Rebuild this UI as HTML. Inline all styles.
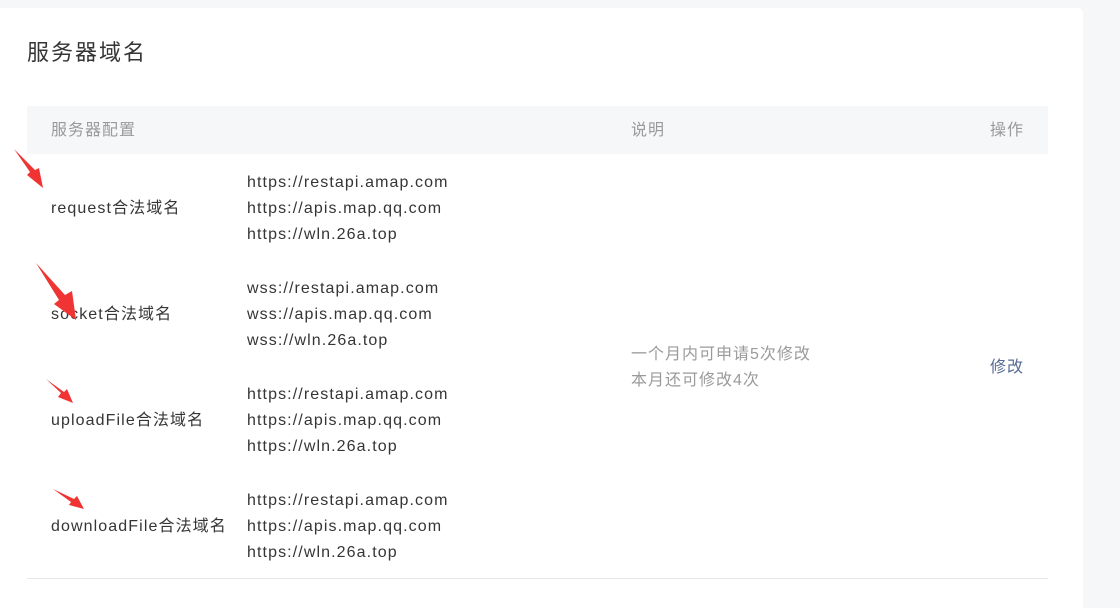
<!DOCTYPE html>
<html><head><meta charset="utf-8"><style>
html,body{margin:0;padding:0;}
body{width:1120px;height:594px;background:#f6f7f9;position:relative;overflow:hidden;font-family:"Liberation Sans","Noto Sans CJK SC",sans-serif;}
.card{position:absolute;left:0;top:8px;width:1083px;height:600px;background:#fff;border-radius:0 6px 0 0;}
.t{position:absolute;white-space:nowrap;}
.title{left:27px;top:37px;font-size:22px;color:#353535;line-height:32px;letter-spacing:2px;}
.head{position:absolute;left:27px;top:106px;width:1021px;height:48px;background:#f6f7f9;}
.h{font-size:16px;color:#9a9a9a;line-height:48px;top:107px;letter-spacing:1px;}
.lab{font-size:16px;color:#353535;left:51px;line-height:26px;letter-spacing:1.1px;}
.url{font-size:16px;color:#353535;left:247px;line-height:26px;letter-spacing:1.1px;}
.note{font-size:16px;color:#9a9a9a;left:631px;line-height:26px;letter-spacing:1px;}
.line{position:absolute;left:27px;top:578px;width:1021px;height:1px;background:#e7e7eb;}
</style></head><body>
<div class="card"></div>
<div class="t title">服务器域名</div>
<div class="head"></div>
<div class="t h" style="left:51px">服务器配置</div>
<div class="t h" style="left:631px">说明</div>
<div class="t h" style="left:990px">操作</div>

<div class="t lab" style="top:196px">request合法域名</div>
<div class="t url" style="top:170px">https://restapi.amap.com<br>https://apis.map.qq.com<br>https://wln.26a.top</div>

<div class="t lab" style="top:302px">socket合法域名</div>
<div class="t url" style="top:276px">wss://restapi.amap.com<br>wss://apis.map.qq.com<br>wss://wln.26a.top</div>

<div class="t lab" style="top:408px">uploadFile合法域名</div>
<div class="t url" style="top:382px">https://restapi.amap.com<br>https://apis.map.qq.com<br>https://wln.26a.top</div>

<div class="t lab" style="top:514px">downloadFile合法域名</div>
<div class="t url" style="top:488px">https://restapi.amap.com<br>https://apis.map.qq.com<br>https://wln.26a.top</div>

<div class="t note" style="top:342px">一个月内可申请5次修改<br>本月还可修改4次</div>
<div class="t" style="left:990px;top:355px;font-size:16px;line-height:26px;color:#576b95;letter-spacing:1px">修改</div>
<div class="line"></div>

<svg style="position:absolute;left:0;top:0" width="1120" height="594">
<g fill="#f03434">
<polygon points="14,149 30,172 27,175 43,188 39,168 35,170"/>
<polygon points="36,263 59,300 54,304 76,320 72,291 65,295"/>
<polygon points="46,379 61,393 58,397 73,403 67,389 64,392"/>
<polygon points="53,489 71,502 69,505 84,509 77,496 74,499"/>
</g>
</svg>
</body></html>
